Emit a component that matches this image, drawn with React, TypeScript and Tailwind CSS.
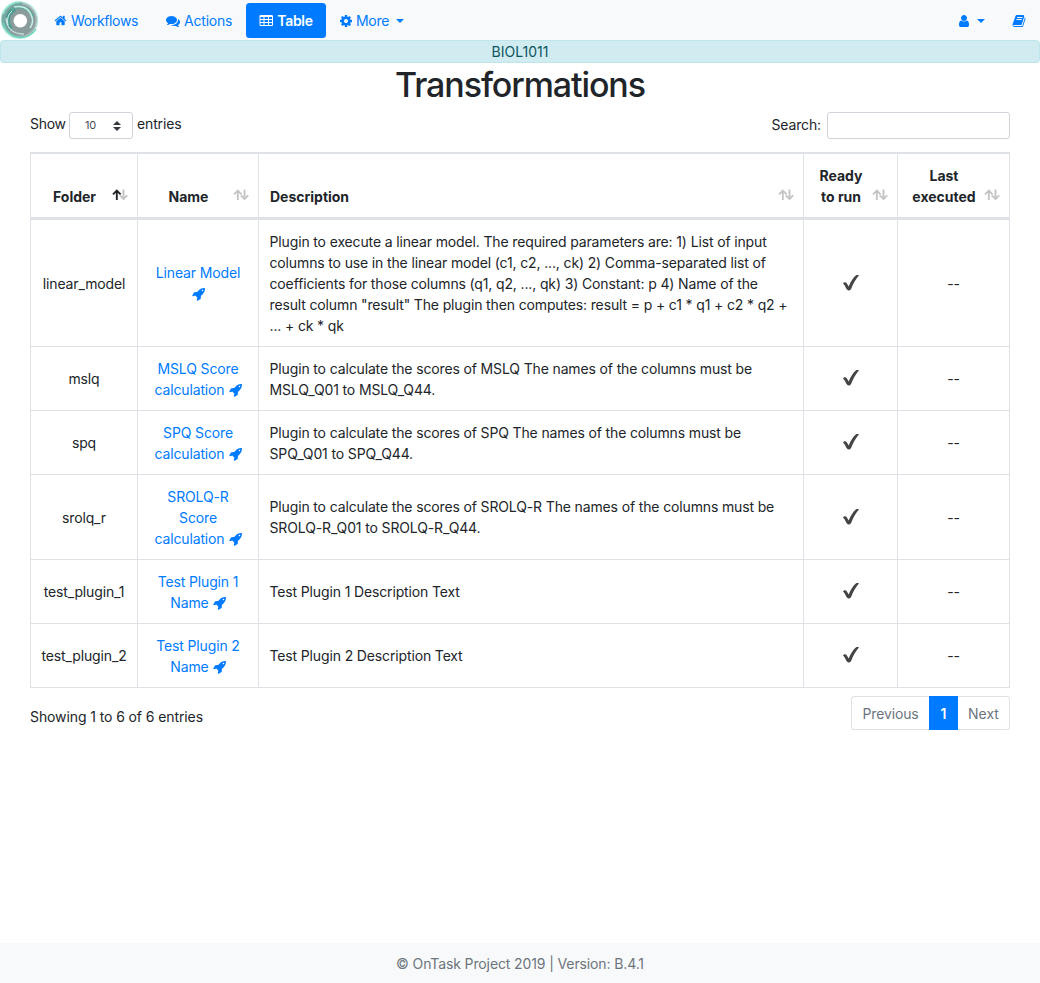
import type { ReactNode } from 'react';

const paths = {
  home: 'M1472 992v480q0 26-19 45t-45 19h-384v-384h-256v384h-384q-26 0-45-19t-19-45v-480q0-1 .5-3t.5-3l575-474 575 474q1 2 1 6zm223-69l-62 74q-8 9-21 11h-3q-13 0-21-7l-692-577-692 577q-12 8-24 7-13-2-21-11l-62-74q-8-10-7-23.5t11-21.5l719-599q32-26 76-26t76 26l244 204v-195q0-14 9-23t23-9h192q14 0 23 9t9 23v408l219 182q10 8 11 21.5t-7 23.5z',
  comments:
    'M1408 768q0 139-94 257t-256.5 186.5-353.5 68.5q-86 0-176-16-124 88-278 128-36 9-86 16h-3q-11 0-20.5-8t-11.5-21q-1-3-1-6.5t.5-6.5 2-6l2.5-5 3.5-5.5 4-5 4.5-5 4-4.5q5-6 23-25t26-29.5 22.5-29 25-38.5 20.5-44q-124-72-195-177t-71-224q0-139 94-257t256.5-186.5 353.5-68.5 353.5 68.5 256.5 186.5 94 257zm384 256q0 120-71 224.5t-195 176.5q10 24 20.5 44t25 38.5 22.5 29 26 29.5 23 25q1 1 4 4.5t4.5 5 4 5 3.5 5.5l2.5 5 2 6 .5 6.5-1 6.5q-3 14-13 22t-22 7q-50-7-86-16-154-40-278-128-90 16-176 16-271 0-472-132 58 4 88 4 161 0 309-45t264-129q125-92 192-212t67-254q0-77-23-152 129 71 204 178t75 230z',
  table:
    'M224 128h1408q66 0 113 47t47 113v1088q0 66-47 113t-113 47h-1408q-66 0-113-47t-47-113v-1088q0-66 47-113t113-47zM192 384v256h384v-256zM704 384v256h448v-256zM1280 384v256h384v-256zM192 768v256h384v-256zM704 768v256h448v-256zM1280 768v256h384v-256zM192 1152v256h384v-256zM704 1152v256h448v-256zM1280 1152v256h384v-256z',
  cog: 'M1152 896q0-106-75-181t-181-75-181 75-75 181 75 181 181 75 181-75 75-181zm512-109v222q0 12-8 23t-20 13l-185 28q-19 54-39 91 35 50 107 138 10 12 10 25t-9 23q-27 37-99 108t-94 71q-12 0-26-9l-138-108q-44 23-91 38-16 136-29 186-7 28-36 28h-222q-14 0-24.5-8.5t-11.5-21.5l-28-184q-49-16-90-37l-141 107q-10 9-25 9-14 0-25-11-126-114-165-168-7-10-7-23 0-12 8-23 15-21 51-66.5t54-70.5q-27-50-41-99l-183-27q-13-2-21-12.5t-8-23.5v-222q0-12 8-23t19-13l186-28q14-46 39-92-40-57-107-138-10-12-10-24 0-10 9-23 26-36 98.5-107.5t94.5-71.5q13 0 26 10l138 107q44-23 91-38 16-136 29-186 7-28 36-28h222q14 0 24.5 8.5t11.5 21.5l28 184q49 16 90 37l142-107q9-9 24-9 13 0 25 10 129 119 165 170 7 8 7 22 0 12-8 23-15 21-51 66.5t-54 70.5q26 50 41 98l183 28q13 2 21 12.5t8 23.5z',
  user: 'M1536 1399q0 109-62.5 187t-150.5 78h-854q-88 0-150.5-78t-62.5-187q0-85 8.5-160.5t31.5-152 58.5-131 94-89 134.5-34.5q131 128 313 128t313-128q76 0 134.5 34.5t94 89 58.5 131 31.5 152 8.5 160.5zm-256-887q0 159-112.5 271.5t-271.5 112.5-271.5-112.5-112.5-271.5 112.5-271.5 271.5-112.5 271.5 112.5 112.5 271.5z',
  book: 'M1703 478q40 57 18 129l-275 906q-19 64-76.5 107.5t-122.5 43.5h-923q-77 0-148.5-53.5t-99.5-131.5q-24-67-2-127 0-4 3-27t4-37q1-8-3-21.5t-3-19.5q2-11 8-21t16.5-23.5 16.5-23.5q23-38 45-91.5t30-91.5q3-10 .5-30t-.5-28q3-11 17-28t17-23q21-36 42-92t25-90q1-9-2.5-32t.5-28q4-13 22-30.5t22-22.5q19-26 42.5-84.5t27.5-96.5q1-8-3-25.5t-2-26.5q2-8 9-18t18-23 17-21q8-12 16.5-30.5t15-35 16-36 19.5-32 26.5-23.5 36-11.5 47.5 5.5l-1 3q38-9 51-9h761q74 0 114 56t18 130l-274 906q-36 119-71.5 153.5t-128.5 34.5h-869q-27 0-38 15-11 16-1 43 24 70 144 70h923q29 0 56-15.5t35-41.5l300-987q7-22 5-57 38 15 59 43zm-1064 2q-4 13 2 22.5t20 9.5h608q13 0 25.5-9.5t16.5-22.5l21-64q4-13-2-22.5t-20-9.5h-608q-13 0-25.5 9.5t-16.5 22.5zm-83 256q-4 13 2 22.5t20 9.5h608q13 0 25.5-9.5t16.5-22.5l21-64q4-13-2-22.5t-20-9.5h-608q-13 0-25.5 9.5t-16.5 22.5z',
  rocket:
    'M1440 448q0-40-28-68t-68-28-68 28-28 68 28 68 68 28 68-28 28-68zm224-288q0 249-75.5 430.5t-253.5 360.5q-81 80-195 176l-20 379q-2 16-16 26l-384 224q-7 4-16 4-12 0-23-9l-64-64q-13-14-8-32l85-276-281-281-276 85q-3 1-9 1-14 0-23-9l-64-64q-17-19-5-39l224-384q10-14 26-16l379-20q96-114 176-195 188-187 358-258t431-71q14 0 24 9.5t10 22.5z',
};

function Icon({ name, className = 'size-[14px]' }: { name: keyof typeof paths; className?: string }) {
  return (
    <svg viewBox="0 0 1792 1792" fill="currentColor" fillRule="evenodd" className={`inline-block shrink-0 ${className}`}>
      <path d={paths[name]} />
    </svg>
  );
}

function Logo() {
  return (
    <svg viewBox="0 0 40 40" className="size-10 shrink-0 bg-white">
      <circle cx="19.5" cy="20" r="18" fill="none" stroke="#b8ece0" strokeWidth="1.6" />
      <circle cx="20" cy="20.5" r="11" fill="none" stroke="#8b9c9c" strokeWidth="11" />
      <circle cx="19.5" cy="20" r="16.6" fill="none" stroke="#a4b3b3" strokeWidth="1.6" />
      <path d="M5 27A16 16 0 0 1 22 4" fill="none" stroke="#79a9a3" strokeWidth="3" />
      <path d="M3 14A18 18 0 0 1 20 2" fill="none" stroke="#8ee6d3" strokeWidth="1.6" />
      <path d="M11 29A12.5 12.5 0 0 1 15 9" fill="none" stroke="#459a8e" strokeWidth="4.5" />
      <path d="M11 10A14 14 0 0 1 33 17" fill="none" stroke="#61a69a" strokeWidth="3" />
      <path d="M14 7Q29 4 32.500 19 33 24 30 28" fill="none" stroke="#c2eee6" strokeWidth="1.5" />
      <path d="M6 18Q7 34 24 34" fill="none" stroke="#bfdcd8" strokeWidth="1.4" />
      <path d="M3 23Q8 38 22 37.500 31 37 36 29" fill="none" stroke="#62d5b9" strokeWidth="1.4" />
      <path d="M12 11Q6 16 8 25" fill="none" stroke="#d6f0ec" strokeWidth="1" />
      <circle cx="20.300" cy="20.700" r="6.800" fill="#fff" />
    </svg>
  );
}

function Caret() {
  return (
    <svg viewBox="0 0 8 4" className="h-1 w-2 shrink-0" fill="currentColor">
      <path d="M0 0h8L4 4z" />
    </svg>
  );
}

function SortArrows({ active = false }: { active?: boolean }) {
  return (
    <svg viewBox="0 0 16 12" className="absolute right-[9px] bottom-4 h-3 w-4" fill="none" strokeWidth="1.9">
      <path d="M11.500 .5V10M7.800 6.300L11.500 10l3.700-3.700" stroke="#c4c5c6" />
      <path d="M4.800 11V1.700M1 5.300l3.800-3.800 3.800 3.800" stroke={active ? '#212529' : '#c4c5c6'} />
    </svg>
  );
}

function Check() {
  return (
    <svg viewBox="0 0 18 18" className="mx-auto mb-px size-[18px]" fill="#444">
      <path d="M1 9.400C1.800 8 3.600 7.800 4.400 8.700L6.700 12.500C8.600 7.800 11.200 3.600 14.100 1.300 15 1 16.200 1.100 17 1.300 13.600 5.400 10.900 10.200 9.200 14.700 8.400 16.600 6.200 17 5.200 15.800 3.700 14.100 3.200 11.200 1 9.400Z" />
    </svg>
  );
}

function Th({ children, active, left }: { children: ReactNode; active?: boolean; left?: boolean }) {
  return (
    <th
      className={`relative border-t-2 border-r border-b-3 border-[#dee2e6] py-[10.5px] pr-[30px] pl-[11px] align-bottom font-bold tracking-[-0.01px] ${left ? 'text-left' : 'text-center'}`}
    >
      {children}
      <SortArrows active={active} />
    </th>
  );
}

const rows = [
  {
    folder: 'linear_model',
    name: ['Linear Model', ''],
    description: [
      'Plugin to execute a linear model. The required parameters are: 1) List of input',
      'columns to use in the linear model (c1, c2, ..., ck) 2) Comma-separated list of',
      'coefficients for those columns (q1, q2, ..., qk) 3) Constant: p 4) Name of the',
      'result column "result" The plugin then computes: result = p + c1 * q1 + c2 * q2 +',
      '... + ck * qk',
    ],
  },
  {
    folder: 'mslq',
    name: ['MSLQ Score', 'calculation'],
    description: ['Plugin to calculate the scores of MSLQ The names of the columns must be', 'MSLQ_Q01 to MSLQ_Q44.'],
  },
  {
    folder: 'spq',
    name: ['SPQ Score', 'calculation'],
    description: ['Plugin to calculate the scores of SPQ The names of the columns must be', 'SPQ_Q01 to SPQ_Q44.'],
  },
  {
    folder: 'srolq_r',
    name: ['SROLQ-R', 'Score', 'calculation'],
    description: ['Plugin to calculate the scores of SROLQ-R The names of the columns must be', 'SROLQ-R_Q01 to SROLQ-R_Q44.'],
  },
  { folder: 'test_plugin_1', name: ['Test Plugin 1', 'Name'], description: ['Test Plugin 1 Description Text'] },
  { folder: 'test_plugin_2', name: ['Test Plugin 2', 'Name'], description: ['Test Plugin 2 Description Text'] },
];

const cell = 'border-r border-b border-[#dee2e6] px-[10.5px] py-[10.5px] align-middle';

export default function App() {
  return (
    <div className="flex min-h-[983px] flex-col bg-white font-['Inter',sans-serif] text-[14px] leading-[21px] tracking-[-0.14px] text-[#212529]">
      <nav className="flex h-10 items-center bg-[#f8f9fa] pt-px text-[#007bff]">
        <div className="-mt-px">
          <Logo />
        </div>
        <a className="ml-[14px] flex w-28 items-center gap-1 tracking-[-0.35px]">
          <Icon name="home" className="size-[13px]" />
          Workflows
        </a>
        <a className="flex w-20 items-center gap-1 tracking-[-0.2px]">
          <Icon name="comments" />
          Actions
        </a>
        <a className="flex h-[35px] w-20 items-center justify-center gap-1 rounded-[3.5px] bg-[#007bff] font-semibold tracking-[-0.3px] text-white">
          <Icon name="table" />
          Table
        </a>
        <a className="ml-[13px] flex items-center gap-[3px] tracking-[-0.3px]">
          <Icon name="cog" />
          More
          <span className="ml-1">
            <Caret />
          </span>
        </a>
        <a className="ml-auto flex items-center gap-[6px]">
          <Icon name="user" />
          <Caret />
        </a>
        <a className="mr-[14px] ml-[27px] flex">
          <Icon name="book" />
        </a>
      </nav>

      <div className="h-[23px] rounded-[3.5px] border border-[#bee5eb] bg-[#d1ecf1] text-center tracking-normal text-[#0c5460]">BIOL1011</div>

      <h1 className="h-[43px] text-center text-[34px] leading-[43px] font-medium tracking-[-1.1px]">Transformations</h1>

      <main className="px-[30px]">
        <div className="mt-[6px] flex h-[27px] items-center justify-between">
          <div className="flex items-center gap-1">
            <span className="-mt-1 w-[35px] tracking-[-0.3px]">Show</span>
            <div className="flex h-[27px] w-16 items-center justify-between rounded-[3px] border border-[#ced4da] pr-[11px] pl-[15px] text-[11px] text-[#495057]">
              10
              <svg viewBox="0 0 8 10" className="h-[10px] w-2" fill="#343a40">
                <path d="M0 4h8L4 0zM0 6h8L4 10z" />
              </svg>
            </div>
            <span className="-mt-1">entries</span>
          </div>
          <label className="flex items-center gap-[6px]">
            <span className="-mt-[2px]">Search:</span>
            <input className="h-[27px] w-[183px] rounded-[3px] border border-[#ced4da] bg-white" />
          </label>
        </div>

        <table className="mt-[13px] w-[980px] table-fixed border-separate border-spacing-0 border-l border-[#dee2e6]">
          <colgroup>
            <col className="w-[107px]" />
            <col className="w-[121px]" />
            <col className="w-[545px]" />
            <col className="w-[94px]" />
            <col className="w-[112px]" />
          </colgroup>
          <thead>
            <tr>
              <Th active>Folder</Th>
              <Th>Name</Th>
              <Th left>Description</Th>
              <Th>
                Ready
                <br />
                to run
              </Th>
              <Th>
                Last
                <br />
                executed
              </Th>
            </tr>
          </thead>
          <tbody>
            {rows.map((row) => (
              <tr key={row.folder}>
                <td className={`${cell} text-center`}>{row.folder}</td>
                <td className={`${cell} text-center text-[#007bff]`}>
                  {row.name.map((line, i) => (
                    <div key={i} className="flex h-[21px] items-center justify-center gap-1 whitespace-nowrap">
                      {line && <span>{line}</span>}
                      {i === row.name.length - 1 && <Icon name="rocket" className="mt-px -mr-px size-[14px]" />}
                    </div>
                  ))}
                </td>
                <td className={cell}>
                  {row.description.map((line) => (
                    <div key={line} className="whitespace-nowrap">
                      {line}
                    </div>
                  ))}
                </td>
                <td className={cell}>
                  <Check />
                </td>
                <td className={`${cell} text-center`}>--</td>
              </tr>
            ))}
          </tbody>
        </table>

        <div className="mt-2 flex justify-between">
          <div className="mt-[10px] tracking-[-0.1px]">Showing 1 to 6 of 6 entries</div>
          <div className="flex h-[34px] text-[#6c757d]">
            <a className="flex w-[78px] items-center justify-center rounded-l-[3.5px] border border-r-0 border-[#dee2e6]">Previous</a>
            <a className="flex w-[29px] items-center justify-center bg-[#007bff] font-semibold text-white">1</a>
            <a className="flex w-[52px] items-center justify-center rounded-r-[3.5px] border border-l-0 border-[#dee2e6] tracking-normal">Next</a>
          </div>
        </div>
      </main>

      <footer className="mt-auto flex h-10 items-center justify-center bg-[#f8f9fa] pt-px tracking-[-0.12px] text-[#6c757d]">
        © OnTask Project 2019 | Version: B.4.1
      </footer>
    </div>
  );
}
